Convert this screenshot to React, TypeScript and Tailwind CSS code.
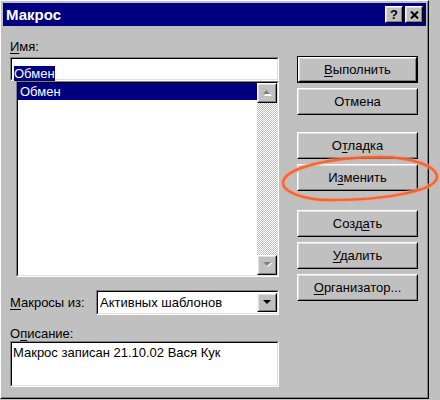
const RAISED = "border border-t-white border-l-white border-r-black border-b-black";
const RAISED_IN = "border border-t-[#dfdfdf] border-l-[#dfdfdf] border-r-[#808080] border-b-[#808080]";
const SUNKEN = "border border-t-[#808080] border-l-[#808080] border-r-white border-b-white";
const SUNKEN_IN = "border border-t-black border-l-black border-r-[#dfdfdf] border-b-[#dfdfdf]";

function U({ children }: { children: string }) {
  return <span className="underline decoration-1 underline-offset-2">{children}</span>;
}

function Btn({
  children,
  def,
  className,
}: {
  children: React.ReactNode;
  def?: boolean;
  className?: string;
}) {
  return (
    <div className={`h-[27px] ${def ? "border border-black" : ""} ${className ?? ""}`}>
      <div className={`h-full ${RAISED}`}>
        <div className={`h-full ${RAISED_IN} flex items-center justify-center text-[13px] text-black`}>
          {children}
        </div>
      </div>
    </div>
  );
}

function Raised({ children, className }: { children?: React.ReactNode; className?: string }) {
  return (
    <div className={`${RAISED} bg-[#c0c0c0] ${className ?? ""}`}>
      <div className={`h-full ${RAISED_IN} flex items-center justify-center`}>{children}</div>
    </div>
  );
}

function Sunken({ children, className }: { children?: React.ReactNode; className?: string }) {
  return (
    <div className={`${SUNKEN} ${className ?? ""}`}>
      <div className={`h-full ${SUNKEN_IN} bg-white`}>{children}</div>
    </div>
  );
}

function ArrowUp() {
  return (
    <svg width="9" height="6" viewBox="0 0 9 6">
      <polygon points="4.5,1 9,6 1,6" fill="#ffffff" />
      <polygon points="3.5,0 7,4 0,4" fill="#808080" />
    </svg>
  );
}

function ArrowDown({ dark }: { dark?: boolean }) {
  return (
    <svg width="9" height="6" viewBox="0 0 9 6">
      {!dark && <polygon points="1,1 9,1 5,5" fill="#ffffff" />}
      <polygon points="0,0 8,0 4,4" fill={dark ? "#000000" : "#808080"} />
    </svg>
  );
}

export default function App() {
  return (
    <div className="relative w-[440px] h-[400px] bg-[#c0c0c0] font-['Liberation_Sans',Arial,sans-serif] text-black">
      <div className="w-[429px] h-[399px] border border-t-white border-l-white border-r-black border-b-black">
        <div className="h-full border border-t-[#c0c0c0] border-l-[#c0c0c0] border-r-[#808080] border-b-[#808080] p-[1px] flex flex-col">
          {/* title bar */}
          <div className="h-[23px] bg-[#000080] flex items-center justify-between pl-[3px] pr-[3px]">
            <span className="text-white font-bold text-[15px] leading-none">Макрос</span>
            <div className="flex gap-[2px]">
              <Raised className="w-[18px] h-[17px]">
                <span className="font-bold text-[13px] leading-none">?</span>
              </Raised>
              <Raised className="w-[18px] h-[17px]">
                <svg width="9" height="8" viewBox="0 0 9 8">
                  <path d="M1 0.5 L8 7.5 M8 0.5 L1 7.5" stroke="#000" strokeWidth="2" />
                </svg>
              </Raised>
            </div>
          </div>

          {/* body */}
          <div className="flex">
            <div className="w-[269px] ml-[7px] flex flex-col">
              <div className="mt-[13px] h-[16px] leading-[16px] text-[13px]">
                <U>И</U>мя:
              </div>
              <Sunken className="mt-[2px] h-[24px]">
                <div className="pl-[2px] pt-[2px]">
                  <span className="bg-[#000080] text-white text-[13px] leading-[15px] inline-block">Обмен</span>
                </div>
              </Sunken>
              <Sunken className="ml-[6px] w-[263px] h-[196px]">
                <div className="flex h-full">
                  <div className="flex-1">
                    <div className="h-[17px] bg-[#000080] text-white text-[13px] leading-[17px] pl-[2px]">Обмен</div>
                  </div>
                  <div className="w-[20px] flex flex-col">
                    <Raised className="h-[20px]">
                      <ArrowUp />
                    </Raised>
                    <div className="flex-1 bg-[repeating-conic-gradient(#c0c0c0_0%_25%,#ffffff_0%_50%)] bg-[length:2px_2px]" />
                    <Raised className="h-[20px]">
                      <ArrowDown />
                    </Raised>
                  </div>
                </div>
              </Sunken>
              <div className="mt-[13px] h-[25px] flex items-center">
                <div className="w-[86px] text-[13px]">
                  <U>М</U>акросы из:
                </div>
                <Sunken className="flex-1 h-[25px]">
                  <div className="flex h-full items-center">
                    <div className="flex-1 pl-[2px] text-[13px]">Активных шаблонов</div>
                    <Raised className="w-[20px] h-[19px]">
                      <ArrowDown dark />
                    </Raised>
                  </div>
                </Sunken>
              </div>
              <div className="mt-[11px] h-[15px] leading-[15px] text-[13px]">
                О<U>п</U>исание:
              </div>
              <Sunken className="h-[46px]">
                <div className="pl-[1px] pt-[2px] text-[13px] leading-[16px]">
                  Макрос записан 21.10.02 Вася Кук
                </div>
              </Sunken>
            </div>

            <div className="w-[121px] ml-[18px] flex flex-col">
              <Btn def className="mt-[30px]">
                <span>
                  <U>В</U>ыполнить
                </span>
              </Btn>
              <Btn className="mt-[5px]">Отмена</Btn>
              <Btn className="mt-[17px]">
                <span>
                  О<U>т</U>ладка
                </span>
              </Btn>
              <Btn className="mt-[5px]">
                <span>
                  И<U>з</U>менить
                </span>
              </Btn>
              <Btn className="mt-[19px]">
                <span>
                  Созд<U>а</U>ть
                </span>
              </Btn>
              <Btn className="mt-[5px]">
                <span>
                  <U>У</U>далить
                </span>
              </Btn>
              <Btn className="mt-[5px]">
                <span>
                  <U>О</U>рганизатор...
                </span>
              </Btn>
            </div>
          </div>
        </div>
      </div>

      {/* hand-drawn highlight */}
      <svg className="absolute left-0 top-0 pointer-events-none" width="440" height="400" viewBox="0 0 440 400">
        <path
          d="M283 183 C283 169 327 157 380 157 C411 157 437 166 437 177 C437 190 389 200 330 200 C304 200 283 192 283 183 Z"
          fill="none"
          stroke="#f6a07c"
          strokeWidth="5"
          opacity="0.6"
        />
        <path
          d="M283 183 C283 169 327 157 380 157 C411 157 437 166 437 177 C437 190 389 200 330 200 C304 200 283 192 283 183 Z"
          fill="none"
          stroke="#ee5f2e"
          strokeWidth="2.5"
          opacity="0.9"
        />
      </svg>
    </div>
  );
}
